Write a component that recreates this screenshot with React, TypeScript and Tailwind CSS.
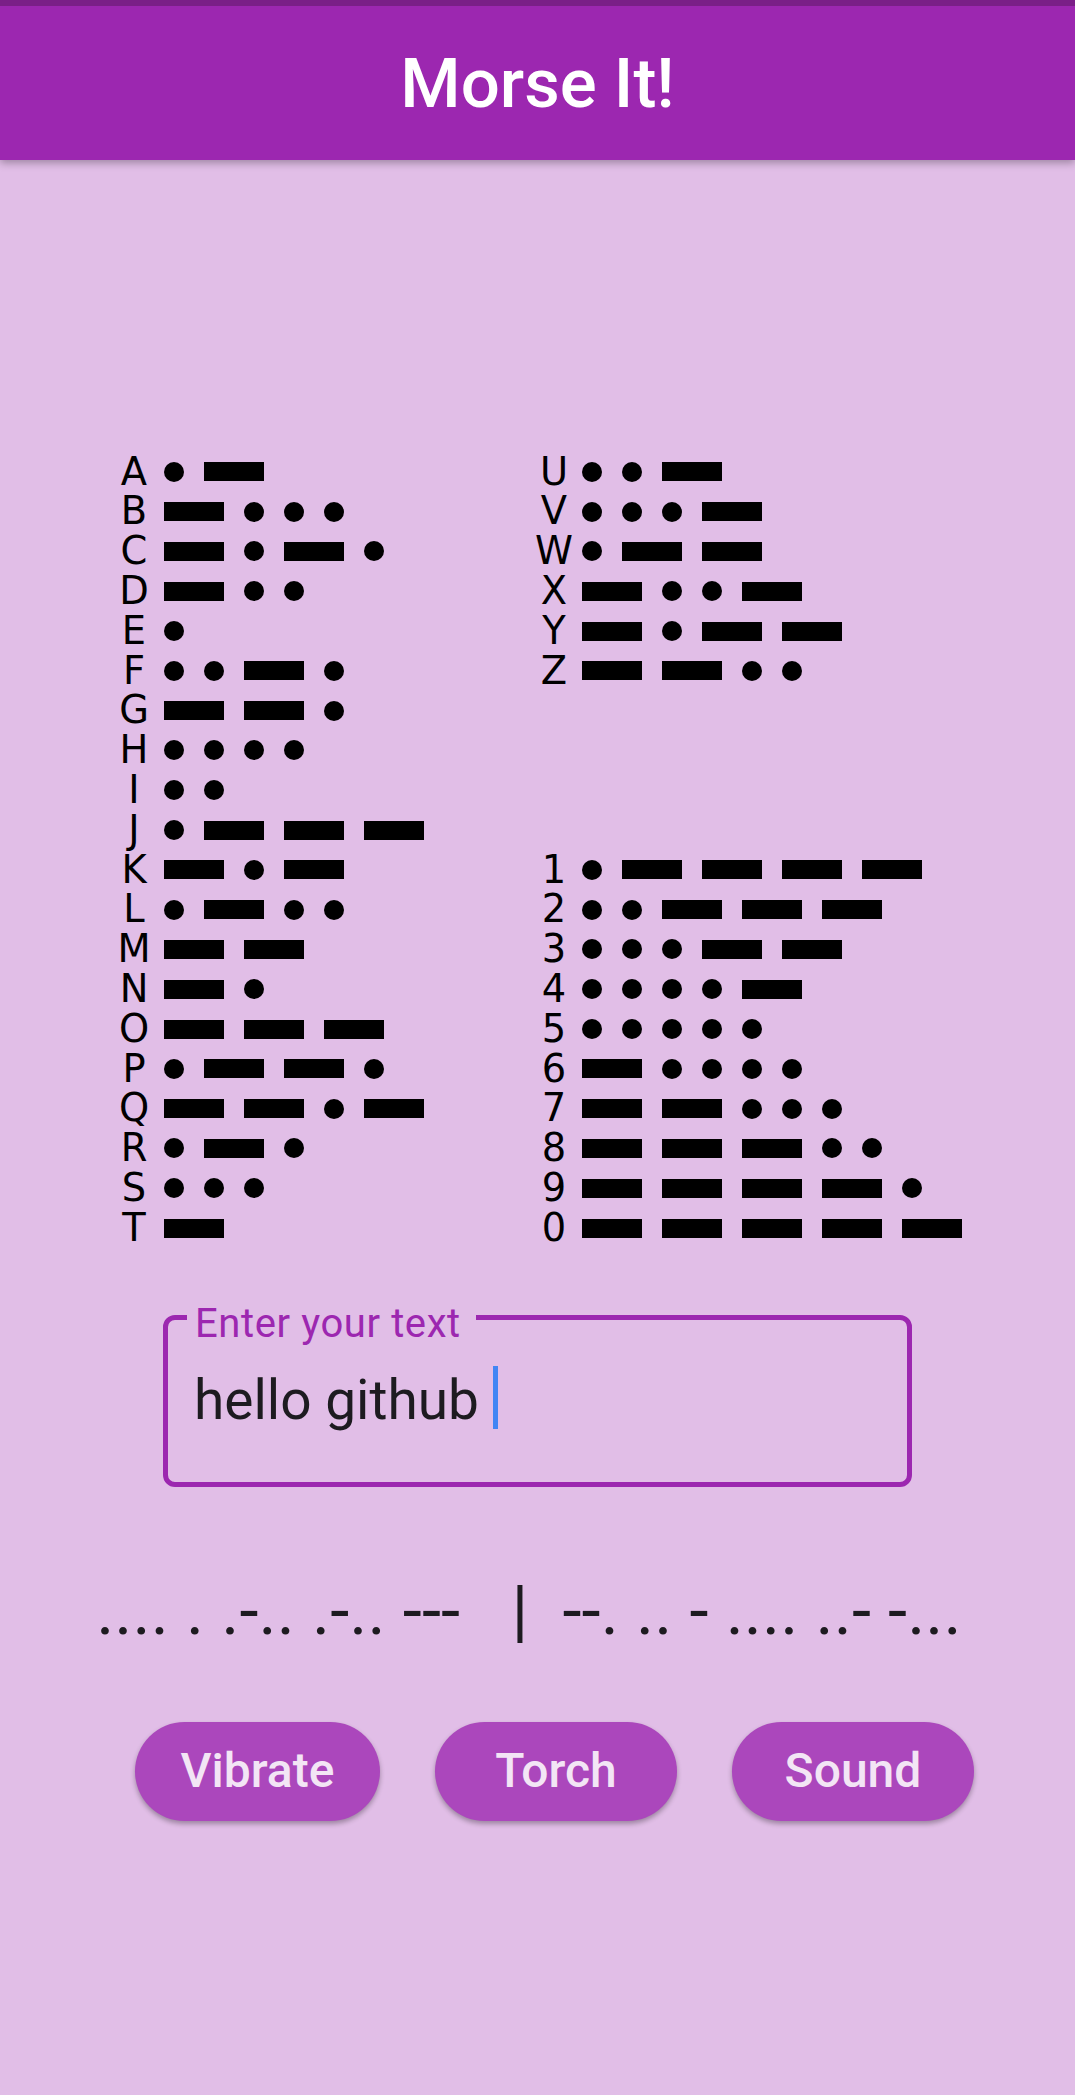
import React from 'react';

const LETTERS: [string, string, string?, string?][] = [
    ['A', '.-', 'U', '..-'],
    ['B', '-...', 'V', '...-'],
    ['C', '-.-.', 'W', '.--'],
    ['D', '-..', 'X', '-..-'],
    ['E', '.', 'Y', '-.--'],
    ['F', '..-.', 'Z', '--..'],
    ['G', '--.'],
    ['H', '....'],
    ['I', '..'],
    ['J', '.---'],
    ['K', '-.-', '1', '.----'],
    ['L', '.-..', '2', '..---'],
    ['M', '--', '3', '...--'],
    ['N', '-.', '4', '....-'],
    ['O', '---', '5', '.....'],
    ['P', '.--.', '6', '-....'],
    ['Q', '--.-', '7', '--...'],
    ['R', '.-.', '8', '---..'],
    ['S', '...', '9', '----.'],
    ['T', '-', '0', '-----'],
];

function Signs({ code }: { code: string }) {
    return (
        <div className="flex items-center gap-[20px]">
            {code.split('').map((c, i) =>
                c === '.' ? (
                    <span key={i} className="block w-[20px] h-[20px] rounded-full bg-black" />
                ) : (
                    <span key={i} className="block w-[60px] h-[19px] bg-black" />
                )
            )}
        </div>
    );
}

function ChartRow({ row }: { row: [string, string, string?, string?] }) {
    const [l, lc, r, rc] = row;
    return (
        <div className="flex items-center h-[39.8px] pl-[114px]">
            <div className="flex items-center w-[420px]">
                <span className="w-[40px] text-center text-[38.4px] leading-none text-black">{l}</span>
                <div className="ml-[10px]">
                    <Signs code={lc} />
                </div>
            </div>
            {r && rc && (
                <div className="flex items-center">
                    <span className="w-[40px] text-center text-[38.4px] leading-none text-black">{r}</span>
                    <div className="ml-[8px]">
                        <Signs code={rc} />
                    </div>
                </div>
            )}
        </div>
    );
}

export default function App() {
    const output = '.... . .-.. .-.. ---   |  --. .. - .... ..- -... ';

    return (
        <div className="w-[1075px] h-[2095px] bg-[#e1bee7] overflow-hidden font-['Roboto',sans-serif]">
            {/* app bar */}
            <header className="relative z-10 shadow-[0_3px_8px_rgba(0,0,0,0.3)]">
                <div className="h-[6px] bg-[#7a1f87]" />
                <div className="h-[154px] bg-[#9c27b0] flex items-center justify-center">
                    <h1 className="text-[69px] leading-[69px] font-medium text-white">Morse It!</h1>
                </div>
            </header>

            {/* morse chart */}
            <div className="mt-[292px] font-['DejaVu_Sans',sans-serif]">
                {LETTERS.map((row) => (
                    <ChartRow key={row[0]} row={row} />
                ))}
            </div>

            {/* input */}
            <div className="relative mt-[67px] ml-[163px] w-[749px] h-[172px] border-[5px] border-[#9c27b0] rounded-[12px] pl-[26px] pt-[46px]">
                <span className="absolute left-[19px] top-[-16px] pl-[8px] pr-[15px] bg-[#e1bee7] text-[40px] leading-[40px] tracking-[0.6px] text-[#9c27b0]">
                    Enter your text
                </span>
                <div className="flex items-start">
                    <span className="mt-[7px] text-[55px] leading-[55px] text-[#1d1b20]">hello github</span>
                    <span className="ml-[14px] w-[5px] h-[63px] bg-[#4285f4]" />
                </div>
            </div>

            {/* morse output */}
            <p className="mt-[89px] text-center whitespace-pre text-[69px] leading-[69px] text-[#1d1b20]">{output}</p>

            {/* actions */}
            <div className="mt-[77px] flex pl-[135px] gap-[55px]">
                {['Vibrate', 'Torch', 'Sound'].map((b, i) => (
                    <button
                        key={b}
                        className={`${i === 0 ? 'w-[245px]' : 'w-[242px]'} h-[99px] rounded-full bg-[#ab47bc] text-[#f3e5f5] text-[48px] font-medium shadow-[0_3px_5px_rgba(0,0,0,0.3)]`}
                    >
                        {b}
                    </button>
                ))}
            </div>
        </div>
    );
}
